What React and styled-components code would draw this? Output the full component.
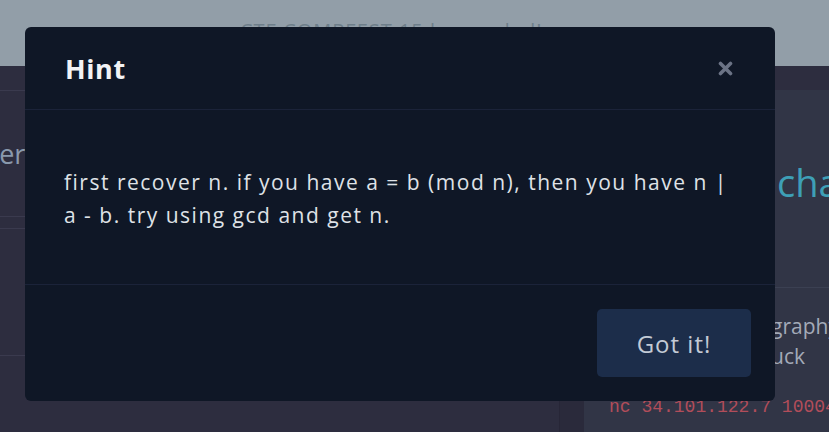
import React from 'react';
import styled, { createGlobalStyle } from 'styled-components';

const GlobalStyle = createGlobalStyle`
  html, body {
    margin: 0;
    padding: 0;
    background: #2d2d3f;
    overflow: hidden;
    font-family: "Open Sans", "Noto Sans", sans-serif;
  }
  * { box-sizing: border-box; }
`;

const Page = styled.div`
  width: 829px;
  height: 432px;
  display: flex;
  flex-direction: column;
`;

const TopBar = styled.div`
  height: 66px;
  flex-shrink: 0;
  background: #929ea8;
  padding-top: 19px;
  padding-left: 240px;
  color: #6e7e8a;
  font-size: 20px;
  line-height: 24px;
  letter-spacing: 1px;
  white-space: nowrap;
`;

const Main = styled.div`
  flex: 1;
  display: flex;
  min-height: 0;
`;

const LeftColumn = styled.div`
  width: 560px;
  flex-shrink: 0;
  padding-top: 24px;
  border-right: 1px solid #272637;
`;

const Block = styled.div`
  border-top: 1px solid #3a3a4e;
  border-bottom: 1px solid #3a3a4e;
  height: ${p => p.$h}px;
  margin-bottom: 11px;
  display: flex;
  align-items: center;
`;

const BlockTitle = styled.h2`
  margin: 0 0 0 -38px;
  font-size: 27px;
  font-weight: 400;
  color: #8a99ad;
`;

const Gutter = styled.div`
  width: 24px;
  flex-shrink: 0;
  background: #2a2a3b;
`;

const RightColumn = styled.div`
  flex: 1;
  padding-top: 24px;
  overflow: hidden;
`;

const Panel = styled.div`
  height: 100%;
  background: #313546;
`;

const PanelHead = styled.div`
  height: 198px;
  border-bottom: 1px solid #3b4052;
  padding: 66px 0 0 193px;
`;

const ChallengeName = styled.h1`
  margin: 0;
  font-size: 38px;
  font-weight: 400;
  color: #3e9fb6;
  white-space: nowrap;
`;

const Description = styled.div`
  padding: 23px 0 0 187px;
  color: #a3aab8;
  font-size: 21px;
  line-height: 30px;
  white-space: nowrap;
`;

const Command = styled.div`
  margin-top: 26px;
  padding-left: 25px;
  font-family: "Liberation Mono", "DejaVu Sans Mono", monospace;
  font-size: 18px;
  color: #b24d5a;
  white-space: nowrap;
`;

const Overlay = styled.div`
  position: fixed;
  inset: 0;
`;

const Dialog = styled.div`
  position: absolute;
  left: 25px;
  top: 27px;
  width: 750px;
  background: #0f1726;
  border-radius: 6px;
  color: #e4e6ea;
`;

const Header = styled.div`
  height: 83px;
  display: flex;
  align-items: center;
  justify-content: space-between;
  padding: 0 42px 0 40px;
  border-bottom: 1px solid #1b2339;
`;

const Title = styled.h3`
  margin: 0;
  font-size: 27px;
  font-weight: 700;
  color: #f2f3f5;
  letter-spacing: 0.6px;
`;

const Close = styled.button`
  border: none;
  background: none;
  padding: 0;
  display: flex;
  cursor: pointer;
`;

const Body = styled.div`
  padding: 56px 46px 52px 39px;
  border-bottom: 1px solid #1b2339;
`;

const HintText = styled.p`
  margin: 0;
  font-size: 21px;
  line-height: 33px;
  letter-spacing: 1.5px;
  color: #dfe2e7;
`;

const Footer = styled.div`
  display: flex;
  justify-content: flex-end;
  padding: 24px;
`;

const Button = styled.button`
  width: 154px;
  height: 68px;
  border: none;
  border-radius: 5px;
  background: #1c2d4a;
  color: #c3cad5;
  font-family: inherit;
  font-size: 24px;
  letter-spacing: 1px;
  cursor: pointer;
`;

const App = () => {
  return (
    <>
      <GlobalStyle />
      <Page>
        <TopBar>CTF COMPFEST 15 has ended!</TopBar>
        <Main>
          <LeftColumn>
            <Block $h={127}>
              <BlockTitle>Filter</BlockTitle>
            </Block>
            <Block $h={128} />
          </LeftColumn>
          <Gutter />
          <RightColumn>
            <Panel>
              <PanelHead>
                <ChallengeName>chall</ChallengeName>
              </PanelHead>
              <Description>
                graphy<br />uck
              </Description>
              <Command>nc 34.101.122.7 10004</Command>
            </Panel>
          </RightColumn>
        </Main>
      </Page>
      <Overlay>
        <Dialog>
          <Header>
            <Title>Hint</Title>
            <Close aria-label="close">
              <svg width="15" height="15" viewBox="0 0 15 15">
                <path d="M2.5 2.5 L12.5 12.5 M12.5 2.5 L2.5 12.5" stroke="#6b7385" strokeWidth="3.6" strokeLinecap="round" />
              </svg>
            </Close>
          </Header>
          <Body>
            <HintText>
              first recover n. if you have a = b (mod n), then you have n | a - b. try using gcd and get n.
            </HintText>
          </Body>
          <Footer>
            <Button>Got it!</Button>
          </Footer>
        </Dialog>
      </Overlay>
    </>
  );
};

export default App;
